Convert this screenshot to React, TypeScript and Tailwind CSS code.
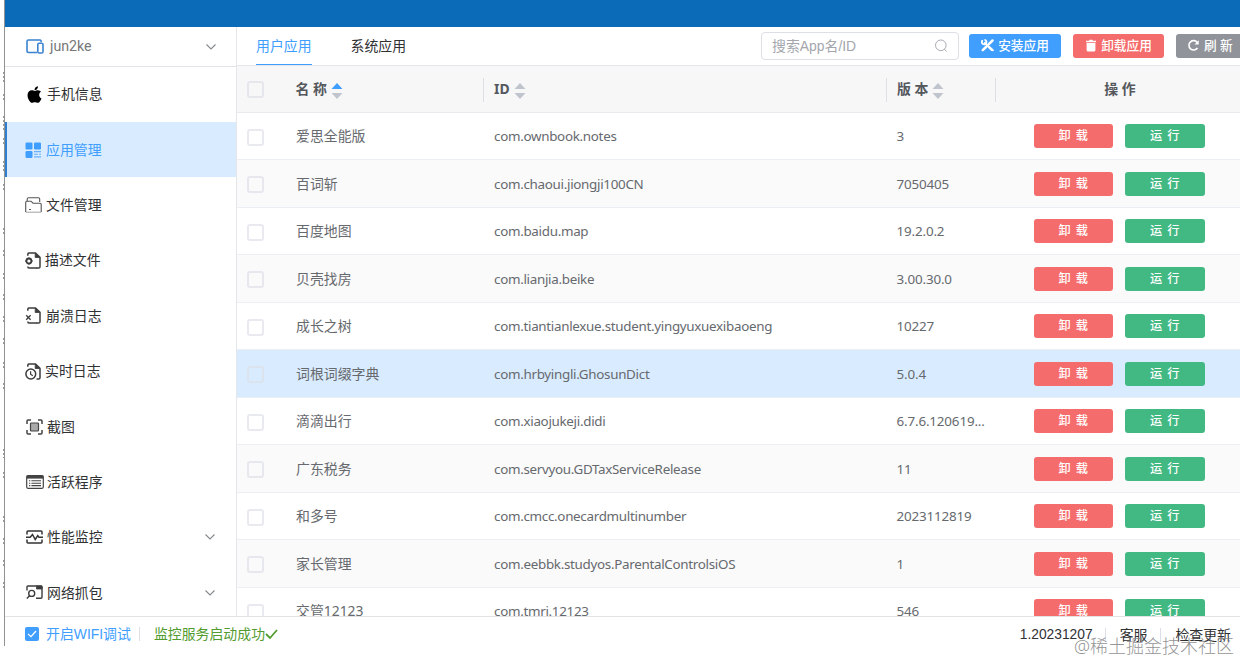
import React from "react";
import clsx from "clsx";
import { FaApple } from "react-icons/fa";

const apps = [
  { name: "爱思全能版", id: "com.ownbook.notes", version: "3" },
  { name: "百词斩", id: "com.chaoui.jiongji100CN", version: "7050405" },
  { name: "百度地图", id: "com.baidu.map", version: "19.2.0.2" },
  { name: "贝壳找房", id: "com.lianjia.beike", version: "3.00.30.0" },
  {
    name: "成长之树",
    id: "com.tiantianlexue.student.yingyuxuexibaoeng",
    version: "10227",
  },
  {
    name: "词根词缀字典",
    id: "com.hrbyingli.GhosunDict",
    version: "5.0.4",
    hover: true,
  },
  { name: "滴滴出行", id: "com.xiaojukeji.didi", version: "6.7.6.120619..." },
  { name: "广东税务", id: "com.servyou.GDTaxServiceRelease", version: "11" },
  { name: "和多号", id: "com.cmcc.onecardmultinumber", version: "2023112819" },
  { name: "家长管理", id: "com.eebbk.studyos.ParentalControlsiOS", version: "1" },
  { name: "交管12123", id: "com.tmri.12123", version: "546" },
];

const menu = [
  { label: "手机信息", icon: <FaApple size={19} className="text-black" />, pad: "pl-[20px]", gap: "gap-[3px]" },
  { label: "应用管理", icon: <AppsIcon />, pad: "pl-[18px]", gap: "gap-[4px]", active: true },
  { label: "文件管理", icon: <FolderIcon />, pad: "pl-[20px]", gap: "gap-[4px]" },
  { label: "描述文件", icon: <DocIcon kind="gear" />, pad: "pl-[20px]", gap: "gap-[3px]" },
  { label: "崩溃日志", icon: <DocIcon kind="cross" />, pad: "pl-[20px]", gap: "gap-[4px]" },
  { label: "实时日志", icon: <DocIcon kind="clock" />, pad: "pl-[20px]", gap: "gap-[3px]" },
  { label: "截图", icon: <CaptureIcon />, pad: "pl-[21px]", gap: "gap-[4px]" },
  { label: "活跃程序", icon: <ListIcon />, pad: "pl-[21px]", gap: "gap-[3px]" },
  { label: "性能监控", icon: <PulseIcon />, pad: "pl-[21px]", gap: "gap-[4px]", arrow: true },
  { label: "网络抓包", icon: <PacketIcon />, pad: "pl-[21px]", gap: "gap-[4px]", arrow: true },
];

export default function App() {
  return (
    <div className="h-[662px] w-[1240px] overflow-hidden bg-white font-['Noto_Sans','Noto_Sans_CJK_SC',sans-serif] text-[13.9px] text-[#66696e]">
      <div className="flex h-[646px]">
        <Edge />
        <div className="flex min-w-0 flex-1 flex-col">
          <div className="h-[26.5px] shrink-0 bg-[#0c6bb8]" />
          <div className="flex h-[590px] shrink-0 overflow-hidden border-b border-[#e2e3e5]">
            <Sidebar />
            <main className="flex min-w-0 flex-1 flex-col overflow-hidden">
              <Toolbar />
              <Table />
            </main>
          </div>
          <StatusBar />
        </div>
      </div>
    </div>
  );
}

function Edge() {
  return (
    <svg width="5" height="646" className="shrink-0" stroke="#999" fill="none">
      <path d="M4.5 0V646" stroke="#929292" />
      <path
        d="M3.5 72V82M3.5 94V102M3.5 116V130M3.5 138V145M3.5 161V171M3.5 184V191M3.5 228V236M3.5 250V258M3.5 273V279M3.5 294V302M3.5 316V324M3.5 338V346M3.5 362V369M3.5 383V390M3.5 449V458M3.5 472V480M3.5 516V524M3.5 538V546M3.5 560V568M3.5 582V590"
        strokeDasharray="2 2"
      />
    </svg>
  );
}

function Sidebar() {
  return (
    <aside className="flex w-[231.5px] shrink-0 flex-col border-r border-[#e4e6ea]">
      <div className="flex h-[40px] shrink-0 items-center border-b border-[#e2e4e7] pt-px pr-[19px] pl-[21px]">
        <DeviceIcon />
        <span className="ml-1.5 pt-px font-['Roboto',sans-serif] text-[14.2px] text-[#777]">
          jun2ke
        </span>
        <Chevron className="ml-auto" />
      </div>
      {menu.map((item) => (
        <div
          key={item.label}
          className={clsx(
            "flex h-[55.4px] shrink-0 items-center pr-5",
            item.pad,
            item.gap,
            item.active
              ? "border-l-2 border-[#2f7fce] bg-[#d9ecff] text-[#409eff]"
              : "text-[#303133]",
          )}
        >
          {item.icon}
          <span className="pt-px">{item.label}</span>
          {item.arrow && <Chevron className="ml-auto" />}
        </div>
      ))}
    </aside>
  );
}

function Toolbar() {
  return (
    <div className="flex h-[39.5px] shrink-0 border-b border-[#e4e6ea] pl-[19.5px]">
      <div className="flex h-[38.5px] items-center border-b border-[#409eff] pt-[3px] text-[#409eff]">
        用户应用
      </div>
      <div className="ml-[39px] flex items-center pt-[2px] text-[#303133]">系统应用</div>
      <div className="ml-auto flex w-[479px] shrink-0 items-center">
        <div className="flex h-[28px] w-[198px] shrink-0 items-center justify-between rounded-[4px] border border-[#dcdfe6] px-2.5 pt-px font-['Liberation_Sans','Noto_Sans_CJK_SC',sans-serif] text-[#a3a6ad]">
          <span>搜索App名/ID</span>
          <svg width="14" height="14" viewBox="0 0 14 14" fill="none" stroke="#a8abb2">
            <circle cx="6.8" cy="6.3" r="5.3" />
            <path d="M10.5 10.2L12.5 12.5" />
          </svg>
        </div>
        <div className="ml-2.5 flex h-6 w-[92px] shrink-0 items-center justify-center gap-1 rounded-[3px] bg-[#409eff] text-[12.7px] font-medium text-white">
          <ToolsIcon />
          安装应用
        </div>
        <div className="ml-3 flex h-6 w-[91px] shrink-0 items-center justify-center gap-1 rounded-[3px] bg-[#f56c6c] text-[12.7px] font-medium text-white">
          <TrashIcon />
          卸载应用
        </div>
        <div className="ml-3 flex h-6 w-[80px] shrink-0 items-center gap-1 rounded-[3px] bg-[#909399] pl-[11px] text-[12.7px] font-medium whitespace-nowrap text-white">
          <RefreshIcon />
          刷 新
        </div>
      </div>
    </div>
  );
}

function Table() {
  return (
    <div className="flex flex-col">
      <div className="flex h-[46.5px] shrink-0 items-center border-b border-[#e8eaee] bg-[#f7f7f8] pt-[2px] font-bold text-[#55585d]">
        <div className="w-[49px] pl-[10px]">
          <Checkbox />
        </div>
        <HeadCell className="w-[198.5px]" label="名 称" active />
        <HeadCell className="w-[403px]" label="ID" />
        <HeadCell className="w-[109px]" label="版 本" />
        <div className="flex-1 pl-[4px] text-center">操 作</div>
      </div>
      {apps.map((app, i) => (
        <div
          key={app.id}
          className={clsx(
            "flex h-[47.5px] shrink-0 items-center border-b border-[#ebeef5]",
            app.hover ? "bg-[#d9ecff]" : i % 2 ? "bg-[#fafafa]" : "bg-white",
          )}
        >
          <div className="w-[49px] pt-[3px] pl-[10px]">
            <Checkbox />
          </div>
          <div className="w-[198.5px] pt-[2px] pl-[10.5px]">{app.name}</div>
          <div className="w-[403px] pt-px pl-[10px] text-[13.4px] tracking-[-0.3px]">
            {app.id}
          </div>
          <div className="w-[109px] pt-px pl-[9.5px] text-[13.4px] tracking-[-0.15px]">
            {app.version}
          </div>
          <div className="flex flex-1 justify-center gap-3 pt-px pl-[2px]">
            <ActionButton className="bg-[#f56c6c]">卸 载</ActionButton>
            <ActionButton className="bg-[#42b883]">运 行</ActionButton>
          </div>
        </div>
      ))}
    </div>
  );
}

function HeadCell({
  label,
  className,
  active,
}: {
  label: string;
  className: string;
  active?: boolean;
}) {
  return (
    <div
      className={clsx(
        "flex h-6 items-center gap-1 border-r border-[#dcdfe6] pl-[10px]",
        className,
      )}
    >
      {label}
      <svg width="12" height="18" viewBox="0 0 12 18" className="mt-0.5">
        <path d="M0.5 7L6 1L11.5 7Z" fill={active ? "#409eff" : "#c0c4cc"} />
        <path d="M0.5 11L6 17L11.5 11Z" fill="#c0c4cc" />
      </svg>
    </div>
  );
}

function ActionButton({
  children,
  className,
}: {
  children: React.ReactNode;
  className: string;
}) {
  return (
    <button
      className={clsx(
        "h-6 w-[79.5px] rounded-[3px] text-[12.2px] font-medium text-white [word-spacing:2px]",
        className,
      )}
    >
      {children}
    </button>
  );
}

function Checkbox() {
  return (
    <div className="h-[17px] w-[17px] rounded-[3px] border-2 border-[#dcdfe6]/65" />
  );
}

function StatusBar() {
  return (
    <footer className="flex h-[29px] shrink-0 items-center pt-[6px]">
      <div className="ml-5 flex h-3.5 w-3.5 items-center justify-center rounded-[2px] bg-[#409eff]">
        <svg width="10" height="8" viewBox="0 0 10 8" fill="none" stroke="#fff" strokeWidth="1.3">
          <path d="M1 4L4 6.7L9 1" />
        </svg>
      </div>
      <span className="ml-[7px] font-['Liberation_Sans','Noto_Sans_CJK_SC',sans-serif] text-[#409eff]">
        开启WIFI调试
      </span>
      <i className="ml-2 h-3.5 w-px bg-[#dcdfe6]" />
      <span className="ml-[14px] pt-px text-[#529b2e]">监控服务启动成功</span>
      <svg width="13" height="12" viewBox="0 0 13 12" fill="none" stroke="#529b2e" strokeWidth="1.8">
        <path d="M1 6L5 10L12 2" />
      </svg>
      <div className="relative ml-auto flex items-center pt-[2px] pr-[9px] text-[#303133]">
        <span className="font-['Liberation_Sans',sans-serif] text-[13.8px]">1.20231207</span>
        <i className="ml-3 h-3.5 w-px bg-[#dcdfe6]" />
        <span className="ml-[14px]">客服</span>
        <i className="ml-[13px] h-3.5 w-px bg-[#dcdfe6]" />
        <span className="ml-[14px]">检查更新</span>
        <span className="absolute top-[11px] right-[6px] text-[18px] leading-6 font-light whitespace-nowrap text-[#888]/90">
          @稀土掘金技术社区
        </span>
      </div>
    </footer>
  );
}

function Chevron({ className }: { className?: string }) {
  return (
    <svg width="12" height="8" viewBox="0 0 12 8" fill="none" stroke="#85888d" strokeWidth="1.1" className={className}>
      <path d="M1.5 1.5L6 6L10.5 1.5" />
    </svg>
  );
}

function DeviceIcon() {
  return (
    <svg width="18" height="15" viewBox="0 0 18 15" fill="none" stroke="#3b82d0" strokeWidth="1.6">
      <path d="M11 13.5H2.5Q1 13.5 1 12V2.5Q1 1 2.5 1H14Q15.2 1 15.2 3" />
      <rect x="11.8" y="4.3" width="5.2" height="9.7" rx="1.3" />
    </svg>
  );
}

function AppsIcon() {
  return (
    <svg width="17" height="16" viewBox="0 0 17 16" fill="#409eff">
      <rect x="0.5" y="0.5" width="7" height="7" rx="1.2" />
      <rect x="9" y="0.5" width="7" height="7" rx="1.2" />
      <rect x="0.5" y="9" width="7" height="7" rx="1.2" />
      <path d="M9 9H16V10.2H9ZM9 11.7H13V12.8H9ZM14 11.7H16V12.8H14ZM9 14.3H16V15.5H9Z" opacity=".75" />
    </svg>
  );
}

function FolderIcon() {
  return (
    <svg width="17" height="16" viewBox="0 0 17 16" fill="none" stroke="#555" strokeWidth="1.1">
      <path d="M2.2 4V2Q2.2.7 3.5.7H13.5Q14.7.7 14.7 2V5" />
      <path d="M.7 15V5.2Q.7 4.2 1.8 4.2H6L8 6.2H15Q16.2 6.2 16.2 7.3V15" />
      <path d="M.7 15.2H16.2" stroke="#aaa" />
      <path d="M4 12.5H6" />
    </svg>
  );
}

function DocIcon({ kind }: { kind: "gear" | "cross" | "clock" }) {
  return (
    <svg width="17" height="17" viewBox="0 0 17 17" fill="none" stroke="#3c3c3c" strokeWidth="1.5">
      <path d="M2.8 3.8V2.2Q2.8 1 4 1H10.5L15 5.3V14.7Q15 16 13.7 16H11.5" />
      <path d="M10.2 1.5V5.5H14.5Z" fill="#3c3c3c" strokeWidth=".8" />
      {kind !== "clock" && <path d="M12 16H4Q2.8 16 2.8 14.5" />}
      {kind === "gear" && (
        <>
          <circle cx="3.9" cy="9" r="2.5" strokeWidth="1.8" />
          <path d="M.3 9H1.2M6.7 9H7.6M3.9 5.5V6.3M3.9 11.7V12.6" />
        </>
      )}
      {kind === "cross" && <path d="M1.2 8.3L5.6 12.7M5.6 8.3L1.2 12.7" strokeWidth="1.3" />}
      {kind === "clock" && (
        <>
          <circle cx="5.8" cy="11" r="4.9" />
          <path d="M5.6 8.2V11.3L7.8 12.8" strokeWidth="1.2" />
        </>
      )}
    </svg>
  );
}

function CaptureIcon() {
  return (
    <svg width="17" height="16" viewBox="0 0 17 16" fill="none" stroke="#444" strokeWidth="1.5">
      <path d="M1 5V2Q1 1 2 1H5M12 1H15Q16 1 16 2V5M16 11V14Q16 15 15 15H12M5 15H2Q1 15 1 14V11" />
      <rect x="4.5" y="4" width="8" height="8" rx=".8" fill="#aaa" strokeWidth="1.2" />
    </svg>
  );
}

function ListIcon() {
  return (
    <svg width="18" height="14" viewBox="0 0 18 14" fill="none" stroke="#444" strokeWidth="1.2">
      <rect x=".7" y=".7" width="16.6" height="12.6" rx="1.2" />
      <path d="M.7 2.2H17.3" strokeWidth="2.8" />
      <path d="M3 5.8H4.3M5.4 5.8H15M3 8.2H4.3M5.4 8.2H15M3 10.6H4.3M5.4 10.6H15" strokeWidth="1.1" />
    </svg>
  );
}

function PulseIcon() {
  return (
    <svg width="17" height="14" viewBox="0 0 17 14" fill="none" stroke="#333" strokeWidth="1.5">
      <path d="M1 4.5V2Q1 1 2 1H15Q16 1 16 2V4.5M16 9.5V12Q16 13 15 13H2Q1 13 1 12V9.5" />
      <path d="M0 7.3H4.2L6.5 4.5L9.2 9.5L11.8 5.5L13 7.3H17" />
    </svg>
  );
}

function PacketIcon() {
  return (
    <svg width="17" height="15" viewBox="0 0 17 15" fill="none" stroke="#3c3c3c" strokeWidth="1.4">
      <path d="M1 5.5V2Q1 1 2 1H15Q16 1 16 2V12.3Q16 13.3 15 13.3H10" />
      <path d="M10.5 1H16V4H10.5Z" fill="#3c3c3c" strokeWidth=".8" />
      <circle cx="5.7" cy="8.4" r="3" />
      <path d="M3.6 10.7L.8 13.6" />
    </svg>
  );
}

function ToolsIcon() {
  return (
    <svg width="13" height="13" viewBox="0 0 13 13" fill="none" stroke="#fff" strokeLinecap="round">
      <path d="M4 4L10.8 10.8" strokeWidth="2.4" />
      <path d="M1.2 1.8A2.3 2.3 0 1 0 4.2 1" strokeWidth="1.8" />
      <path d="M11.5 1.5L7.9 5.1M5 8L1.8 11.2" strokeWidth="2.5" />
      <path d="M9 8.6L12 11.3" strokeWidth="1.8" />
    </svg>
  );
}

function TrashIcon() {
  return (
    <svg width="12" height="13" viewBox="0 0 12 13" fill="#fff">
      <path d="M1 1.8H4L4.6.8H7.4L8 1.8H11V3.2H1ZM1.6 4H10.4V11Q10.4 12.5 9 12.5H3Q1.6 12.5 1.6 11Z" />
    </svg>
  );
}

function RefreshIcon() {
  return (
    <svg width="13" height="13" viewBox="0 0 13 13" fill="none" stroke="#fff" strokeWidth="1.6">
      <path d="M10.5 9A4.7 4.7 0 1 1 10.5 3.6" />
      <path d="M11.7 1.2V5.5H7.5Z" fill="#fff" stroke="none" />
    </svg>
  );
}
